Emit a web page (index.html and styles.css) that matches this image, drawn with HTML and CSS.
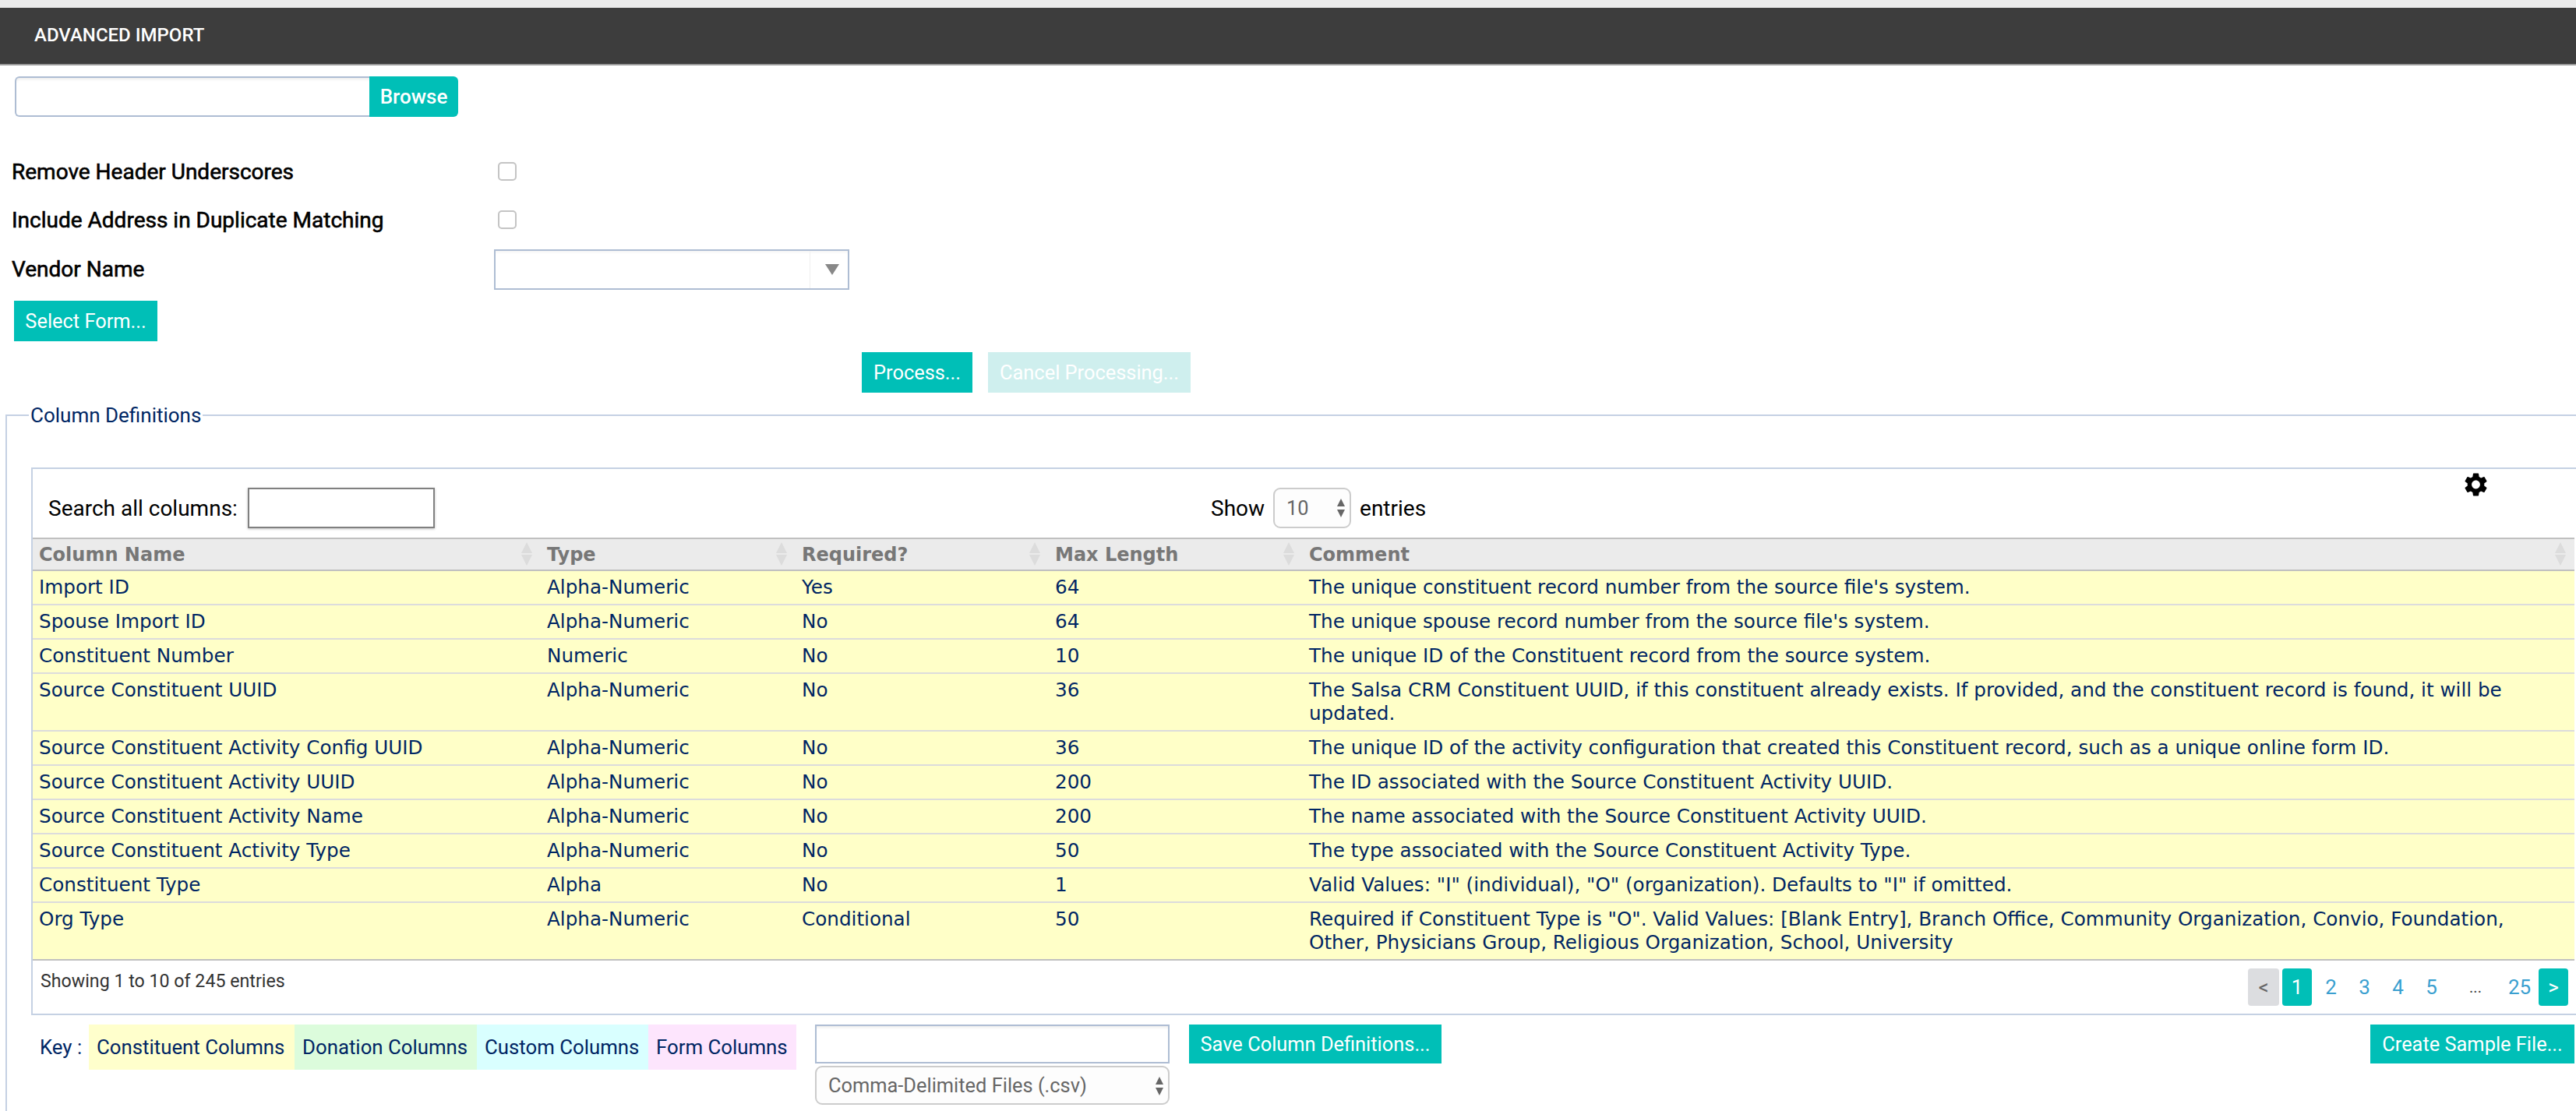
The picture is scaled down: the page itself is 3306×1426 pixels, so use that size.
FILE: index.html
```html
<!DOCTYPE html>
<html lang="en">
<head>
  <meta charset="UTF-8">
  <title>Advanced Import</title>
  <link rel="stylesheet" href="styles.css">
</head>
<body>

  <div class="top-strip"></div>
  <header class="page-header">ADVANCED IMPORT</header>

  <div class="upload-row">
    <input type="text" class="upload-input">
    <button class="btn browse-btn">Browse</button>
  </div>

  <div class="options">
    <div class="option-row">
      <label class="option-label">Remove Header Underscores</label>
      <input type="checkbox" class="option-check">
    </div>
    <div class="option-row">
      <label class="option-label">Include Address in Duplicate Matching</label>
      <input type="checkbox" class="option-check">
    </div>
    <div class="option-row vendor-row">
      <label class="option-label">Vendor Name</label>
      <div class="vendor-select"><span class="vendor-arrow"></span></div>
    </div>
  </div>

  <button class="btn select-form-btn">Select Form...</button>

  <div class="actions">
    <button class="btn process-btn">Process...</button>
    <button class="btn btn-disabled cancel-btn">Cancel Processing...</button>
  </div>

  <fieldset class="definitions">
    <legend>Column Definitions</legend>

    <div class="table-box">
      <div class="toolbar">
        <div class="search-group">
          <label>Search all columns:</label>
          <input type="text" class="search-input">
        </div>
        <div class="length-group">
          <span>Show</span>
          <div class="spin-select length-select">
            <select><option>10</option></select>
          </div>
          <span>entries</span>
        </div>
        <svg class="gear" viewBox="2.4 2 19.2 20" aria-hidden="true">
          <path d="M19.14 12.94c.04-.3.06-.61.06-.94 0-.32-.02-.64-.07-.94l2.03-1.58c.18-.14.23-.41.12-.61l-1.92-3.32c-.12-.22-.37-.29-.59-.22l-2.39.96c-.5-.38-1.03-.7-1.62-.94l-.36-2.54c-.04-.24-.24-.41-.48-.41h-3.84c-.24 0-.43.17-.47.41l-.36 2.54c-.59.24-1.13.57-1.62.94l-2.39-.96c-.22-.08-.47 0-.59.22L2.74 8.87c-.12.21-.08.47.12.61l2.03 1.58c-.05.3-.09.63-.09.94s.02.64.07.94l-2.03 1.58c-.18.14-.23.41-.12.61l1.92 3.32c.12.22.37.29.59.22l2.39-.96c.5.38 1.03.7 1.62.94l.36 2.54c.05.24.24.41.48.41h3.84c.24 0 .44-.17.47-.41l.36-2.54c.59-.24 1.13-.56 1.62-.94l2.39.96c.22.08.47 0 .59-.22l1.92-3.32c.12-.22.07-.47-.12-.61l-2.01-1.58zM12 15.6c-1.98 0-3.6-1.62-3.6-3.6s1.62-3.6 3.6-3.6 3.6 1.62 3.6 3.6-1.62 3.6-3.6 3.6z"/>
        </svg>
      </div>

      <table class="columns-table">
        <colgroup>
          <col class="col-name"><col class="col-type"><col class="col-required"><col class="col-length"><col class="col-comment">
        </colgroup>
        <thead>
          <tr>
            <th>Column Name</th>
            <th>Type</th>
            <th>Required?</th>
            <th>Max Length</th>
            <th>Comment</th>
          </tr>
        </thead>
        <tbody>
          <tr><td>Import ID</td><td>Alpha-Numeric</td><td>Yes</td><td>64</td><td>The unique constituent record number from the source file's system.</td></tr>
          <tr><td>Spouse Import ID</td><td>Alpha-Numeric</td><td>No</td><td>64</td><td>The unique spouse record number from the source file's system.</td></tr>
          <tr><td>Constituent Number</td><td>Numeric</td><td>No</td><td>10</td><td>The unique ID of the Constituent record from the source system.</td></tr>
          <tr><td>Source Constituent UUID</td><td>Alpha-Numeric</td><td>No</td><td>36</td><td>The Salsa CRM Constituent UUID, if this constituent already exists. If provided, and the constituent record is found, it will be updated.</td></tr>
          <tr><td>Source Constituent Activity Config UUID</td><td>Alpha-Numeric</td><td>No</td><td>36</td><td>The unique ID of the activity configuration that created this Constituent record, such as a unique online form ID.</td></tr>
          <tr><td>Source Constituent Activity UUID</td><td>Alpha-Numeric</td><td>No</td><td>200</td><td>The ID associated with the Source Constituent Activity UUID.</td></tr>
          <tr><td>Source Constituent Activity Name</td><td>Alpha-Numeric</td><td>No</td><td>200</td><td>The name associated with the Source Constituent Activity UUID.</td></tr>
          <tr><td>Source Constituent Activity Type</td><td>Alpha-Numeric</td><td>No</td><td>50</td><td>The type associated with the Source Constituent Activity Type.</td></tr>
          <tr><td>Constituent Type</td><td>Alpha</td><td>No</td><td>1</td><td>Valid Values: "I" (individual), "O" (organization). Defaults to "I" if omitted.</td></tr>
          <tr><td>Org Type</td><td>Alpha-Numeric</td><td>Conditional</td><td>50</td><td>Required if Constituent Type is "O". Valid Values: [Blank Entry], Branch Office, Community Organization, Convio, Foundation, Other, Physicians Group, Religious Organization, School, University</td></tr>
        </tbody>
      </table>

      <div class="table-footer">
        <div class="table-info">Showing 1 to 10 of 245 entries</div>
        <div class="pagination">
          <a class="page page-prev">&lt;</a>
          <a class="page page-current">1</a>
          <a class="page">2</a>
          <a class="page">3</a>
          <a class="page">4</a>
          <a class="page">5</a>
          <span class="page page-gap">...</span>
          <a class="page page-last">25</a>
          <a class="page page-next">&gt;</a>
        </div>
      </div>
    </div>

    <div class="key-row">
      <span class="key-label">Key :</span>
      <span class="key-item key-constituent">Constituent Columns</span>
      <span class="key-item key-donation">Donation Columns</span>
      <span class="key-item key-custom">Custom Columns</span>
      <span class="key-item key-form">Form Columns</span>
      <div class="save-fields">
        <input type="text" class="save-input">
        <div class="spin-select file-select">
          <select><option>Comma-Delimited Files (.csv)</option></select>
        </div>
      </div>
      <button class="btn save-btn">Save Column Definitions...</button>
      <button class="btn sample-btn">Create Sample File...</button>
    </div>
  </fieldset>

</body>
</html>
```

FILE: styles.css
```css
html, body {
  overflow: hidden;
}
body {
  margin: 0;
  width: 3306px;
  height: 1426px;
  background: #fff;
  color: #000;
  font-family: 'Roboto', sans-serif;
  font-size: 28px;
}
.top-strip {
  height: 10px;
  background: #ebebeb;
}
.page-header {
  height: 72px;
  padding-left: 44px;
  line-height: 70px;
  background: #3d3d3d;
  border-bottom: 2px solid #999;
  color: #fff;
  font-size: 24px;
  font-weight: 500;
}

/* Buttons */
.btn {
  height: 52px;
  padding: 0;
  border: none;
  background: #00bfb7;
  color: #fff;
  font-family: inherit;
  font-size: 25.4px;
  white-space: nowrap;
}
.btn-disabled {
  background: #cfefee;
}

/* Upload */
.upload-row {
  display: flex;
  margin: 14px 0 0 19px;
}
.upload-input {
  box-sizing: border-box;
  width: 455px;
  height: 52px;
  border: 2px solid #aebdd3;
  border-right: none;
  border-radius: 6px 0 0 6px;
  box-shadow: inset 0 4px 4px -3px #e4e4e4;
}
.browse-btn {
  width: 114px;
  border-radius: 0 6px 6px 0;
  font-size: 26px;
  font-weight: 500;
}

/* Options */
.options {
  margin-top: 44px;
  padding-left: 15px;
}
.option-row {
  display: flex;
  align-items: center;
  height: 52px;
  margin-bottom: 10px;
}
.vendor-row {
  margin: 12px 0 0;
}
.option-label {
  width: 619px;
  -webkit-text-stroke: 0.6px #000;
}
.vendor-row .option-label {
  margin-top: -2px;
}
.option-check {
  appearance: none;
  box-sizing: border-box;
  width: 24px;
  height: 24px;
  margin: 0 0 0 5px;
  border: 2px solid #c4c4c4;
  border-radius: 5px;
  background: #fff;
}
.vendor-select {
  display: flex;
  justify-content: flex-end;
  box-sizing: border-box;
  width: 456px;
  height: 52px;
  border: 2px solid #aebdd3;
  box-shadow: inset 0 4px 4px -3px #eee;
}
.vendor-arrow {
  display: flex;
  align-items: center;
  justify-content: center;
  width: 49px;
  border-left: 1px solid #f0f0f0;
  padding-left: 8px;
  box-sizing: border-box;
}
.vendor-arrow::after {
  content: "";
  border-left: 9px solid transparent;
  border-right: 9px solid transparent;
  border-top: 14px solid #888;
}
.select-form-btn {
  display: block;
  width: 184px;
  margin: 14px 0 0 18px;
}
.actions {
  display: flex;
  gap: 20px;
  margin: 14px 0 0 1106px;
}
.process-btn {
  width: 142px;
}
.cancel-btn {
  width: 260px;
}

/* Column definitions */
.definitions {
  box-sizing: border-box;
  width: 3400px;
  margin: 14px 0 0 7px;
  padding: 0 0 40px 31px;
  border: 2px solid #c5d1e3;
  border-bottom: none;
  min-inline-size: 0;
}
.definitions legend {
  margin-left: -3px;
  padding: 0 2px;
  line-height: 30px;
  color: #002664;
  font-size: 26px;
}
.table-box {
  width: 3340px;
  margin-top: 52px;
  border: 2px solid #c5d1e3;
  border-right: none;
}
.toolbar {
  display: grid;
  grid-template-columns: 1512px 1609px auto;
  height: 88px;
}
.search-group {
  display: flex;
  align-items: center;
  gap: 13px;
  height: 52px;
  margin-top: 24px;
  padding-left: 20px;
}
.search-input {
  box-sizing: border-box;
  width: 240px;
  height: 52px;
  border: 2px solid #808080;
  box-shadow: 0 1px 3px rgba(0,0,0,0.25);
}
.length-group {
  display: flex;
  align-items: center;
  gap: 11px;
  height: 52px;
  margin-top: 24px;
}
.gear {
  width: 29px;
  height: 30px;
  margin-top: 5px;
  fill: #000;
}

/* Native looking select with up/down arrows */
.spin-select {
  position: relative;
  box-sizing: border-box;
  height: 52px;
}
.spin-select select {
  appearance: none;
  box-sizing: border-box;
  width: 100%;
  height: 100%;
  padding: 0 0 0 15px;
  border: 2px solid #ccc;
  border-radius: 9px;
  background: #fdfdfd;
  color: #666;
  font-family: 'Roboto', sans-serif;
  font-size: 25.4px;
}
.spin-select::before,
.spin-select::after {
  content: "";
  position: absolute;
  right: 8px;
  border-left: 5px solid transparent;
  border-right: 5px solid transparent;
}
.spin-select::before {
  top: 14px;
  border-bottom: 10px solid #666;
}
.spin-select::after {
  top: 28px;
  border-top: 10px solid #666;
}
.length-select {
  width: 100px;
}

/* Table */
.columns-table {
  width: 3262px;
  border-collapse: collapse;
  table-layout: fixed;
  font-family: 'DejaVu Sans', sans-serif;
  font-size: 24.65px;
  line-height: 30px;
  color: #002664;
}
.col-name { width: 652px; }
.col-type { width: 327px; }
.col-required { width: 325px; }
.col-length { width: 326px; }
.columns-table th {
  position: relative;
  height: 39px;
  padding: 0 8px;
  border-top: 2px solid #c0c0c0;
  border-bottom: 2px solid #c0c0c0;
  background: #ebebeb;
  color: #777;
  font-size: 24px;
  font-weight: bold;
  text-align: left;
}
.columns-table th::before,
.columns-table th::after {
  content: "";
  position: absolute;
  right: 11px;
  border-left: 7px solid transparent;
  border-right: 7px solid transparent;
}
.columns-table th::before {
  top: 4px;
  border-bottom: 14px solid #dcdcdc;
}
.columns-table th::after {
  top: 20px;
  border-top: 14px solid #dcdcdc;
}
.columns-table td {
  padding: 6px 8px;
  border-bottom: 2px solid #dcdcdc;
  background: #ffffc8;
  vertical-align: top;
}
.columns-table tr:last-child td {
  border-bottom-color: #c0c0c0;
}

/* Table footer */
.table-footer {
  display: flex;
  justify-content: space-between;
  box-sizing: border-box;
  width: 3262px;
  height: 68px;
  padding: 10px 8px 0 10px;
}
.table-info {
  margin-top: 1px;
  line-height: 30px;
  color: #333;
  font-size: 23.2px;
}
.pagination {
  display: flex;
  height: 48px;
  font-size: 26px;
}
.page {
  display: block;
  width: 43px;
  line-height: 48px;
  color: #3a9fd0;
  text-align: center;
}
.page-prev {
  width: 40px;
  margin-right: 4px;
  border-radius: 4px;
  background: #dcdde0;
  color: #666;
}
.page-current,
.page-next {
  width: 38px;
  border-radius: 4px;
  background: #00bfb7;
  color: #fff;
}
.page-current {
  margin-right: 3px;
}
.page-gap {
  width: 70px;
  color: #444;
  font-size: 20px;
}
.page-last {
  margin-right: 3px;
}

/* Key */
.key-row {
  display: flex;
  align-items: flex-start;
  width: 3264px;
  margin-top: 12px;
}
.key-label {
  box-sizing: border-box;
  width: 74px;
  padding-left: 11px;
  line-height: 58px;
  color: #002664;
  font-size: 25.8px;
  white-space: nowrap;
}
.key-item {
  box-sizing: border-box;
  height: 58px;
  padding-left: 10px;
  line-height: 58px;
  color: #002664;
  font-size: 25.8px;
  white-space: nowrap;
}
.key-constituent { width: 264px; background: #ffffcc; }
.key-donation { width: 234px; background: #dcfcdc; }
.key-custom { width: 220px; background: #d9ffff; }
.key-form { width: 190px; background: #fde5fd; }
.save-fields {
  width: 455px;
  margin-left: 24px;
}
.save-input {
  display: block;
  box-sizing: border-box;
  width: 100%;
  height: 50px;
  margin-bottom: 3px;
  border: 2px solid #aebdd3;
  box-shadow: inset 0 4px 4px -3px #e4e4e4;
}
.file-select {
  height: 50px;
}
.save-btn {
  width: 324px;
  height: 50px;
  margin-left: 25px;
}
.sample-btn {
  width: 262px;
  height: 50px;
  margin-left: auto;
}
```
